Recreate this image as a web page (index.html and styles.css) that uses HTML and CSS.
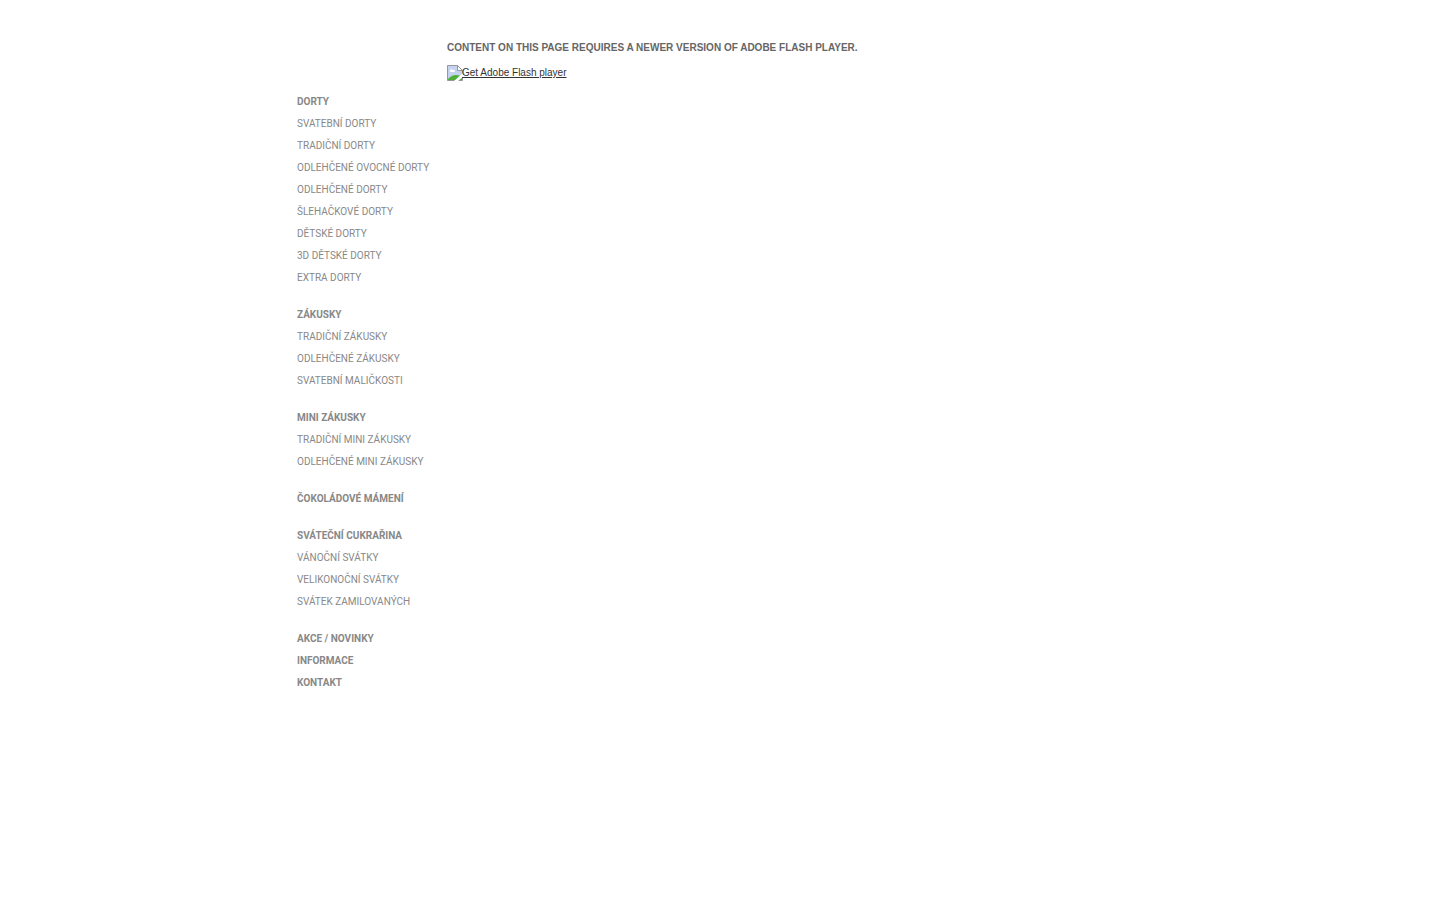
FILE: index.html
```html
<!DOCTYPE html>
<html lang="cs">
<head>
<meta charset="utf-8">
<title>Dorty a zákusky</title>
<link rel="stylesheet" href="styles.css">
</head>
<body>
<div class="page">
  <nav class="menu">
    <ul class="group">
      <li><a class="main" href="#">DORTY</a></li>
      <li><a href="#">SVATEBNÍ DORTY</a></li>
      <li><a href="#">TRADIČNÍ DORTY</a></li>
      <li><a href="#">ODLEHČENÉ OVOCNÉ DORTY</a></li>
      <li><a href="#">ODLEHČENÉ DORTY</a></li>
      <li><a href="#">ŠLEHAČKOVÉ DORTY</a></li>
      <li><a href="#">DĚTSKÉ DORTY</a></li>
      <li><a href="#">3D DĚTSKÉ DORTY</a></li>
      <li><a href="#">EXTRA DORTY</a></li>
    </ul>
    <ul class="group">
      <li><a class="main" href="#">ZÁKUSKY</a></li>
      <li><a href="#">TRADIČNÍ ZÁKUSKY</a></li>
      <li><a href="#">ODLEHČENÉ ZÁKUSKY</a></li>
      <li><a href="#">SVATEBNÍ MALIČKOSTI</a></li>
    </ul>
    <ul class="group">
      <li><a class="main" href="#">MINI ZÁKUSKY</a></li>
      <li><a href="#">TRADIČNÍ MINI ZÁKUSKY</a></li>
      <li><a href="#">ODLEHČENÉ MINI ZÁKUSKY</a></li>
    </ul>
    <ul class="group">
      <li><a class="main" href="#">ČOKOLÁDOVÉ MÁMENÍ</a></li>
    </ul>
    <ul class="group">
      <li><a class="main" href="#">SVÁTEČNÍ CUKRAŘINA</a></li>
      <li><a href="#">VÁNOČNÍ SVÁTKY</a></li>
      <li><a href="#">VELIKONOČNÍ SVÁTKY</a></li>
      <li><a href="#">SVÁTEK ZAMILOVANÝCH</a></li>
    </ul>
    <ul class="group">
      <li><a class="main" href="#">AKCE / NOVINKY</a></li>
      <li><a class="main" href="#">INFORMACE</a></li>
      <li><a class="main" href="#">KONTAKT</a></li>
    </ul>
  </nav>
  <main class="content">
    <h1 class="notice">CONTENT ON THIS PAGE REQUIRES A NEWER VERSION OF ADOBE FLASH PLAYER.</h1>
    <a class="player" href="#"><svg class="picture" width="16" height="16" viewBox="0 0 16 16" aria-hidden="true">
      <path d="M.5.5h10l5 5v10H.5z" fill="#c3d3f0"/>
      <path d="M3 6c0-2 2-2 2.500-1 2-1 3 1 2 2H3z" fill="#fff"/>
      <path d="M1 15v-1q4-4 8-4 4 0 6 2v3z" fill="#4fae35"/>
      <path d="M.5 15.500V.5h10l5 5v10z" fill="none" stroke="#979797"/>
      <path d="M10.500.5v5h5z" fill="#fff" stroke="#979797"/>
      <path d="M16 8 7 16h4l5-4z" fill="#fff"/>
    </svg><span>Get Adobe Flash player</span></a>
  </main>
</div>
</body>
</html>
```
FILE: styles.css
```css
body {
  margin: 0;
  background: #fff;
  color: #666;
  font: 10px/14px "Liberation Sans", Arial, sans-serif;
}

.page {
  display: grid;
  grid-template-columns: 150px 1fr;
  max-width: 846px;
  margin: 0 auto;
  padding-top: 41px;
}

.menu {
  display: flex;
  flex-direction: column;
  gap: 15px;
  padding-top: 50px;
  font-family: Roboto, sans-serif;
  line-height: 22px;
  white-space: nowrap;
}

.group {
  margin: 0;
  padding: 0;
  list-style: none;
}

.menu a {
  display: block;
  color: #888;
  text-decoration: none;
}

.menu .main {
  font-weight: bold;
}

.notice {
  margin: 0 0 10px;
  font-size: 10px;
  line-height: 14px;
}

.player {
  display: inline-flex;
  color: #333;
  line-height: 16px;
}

.picture {
  margin-right: -1px;
}
```
